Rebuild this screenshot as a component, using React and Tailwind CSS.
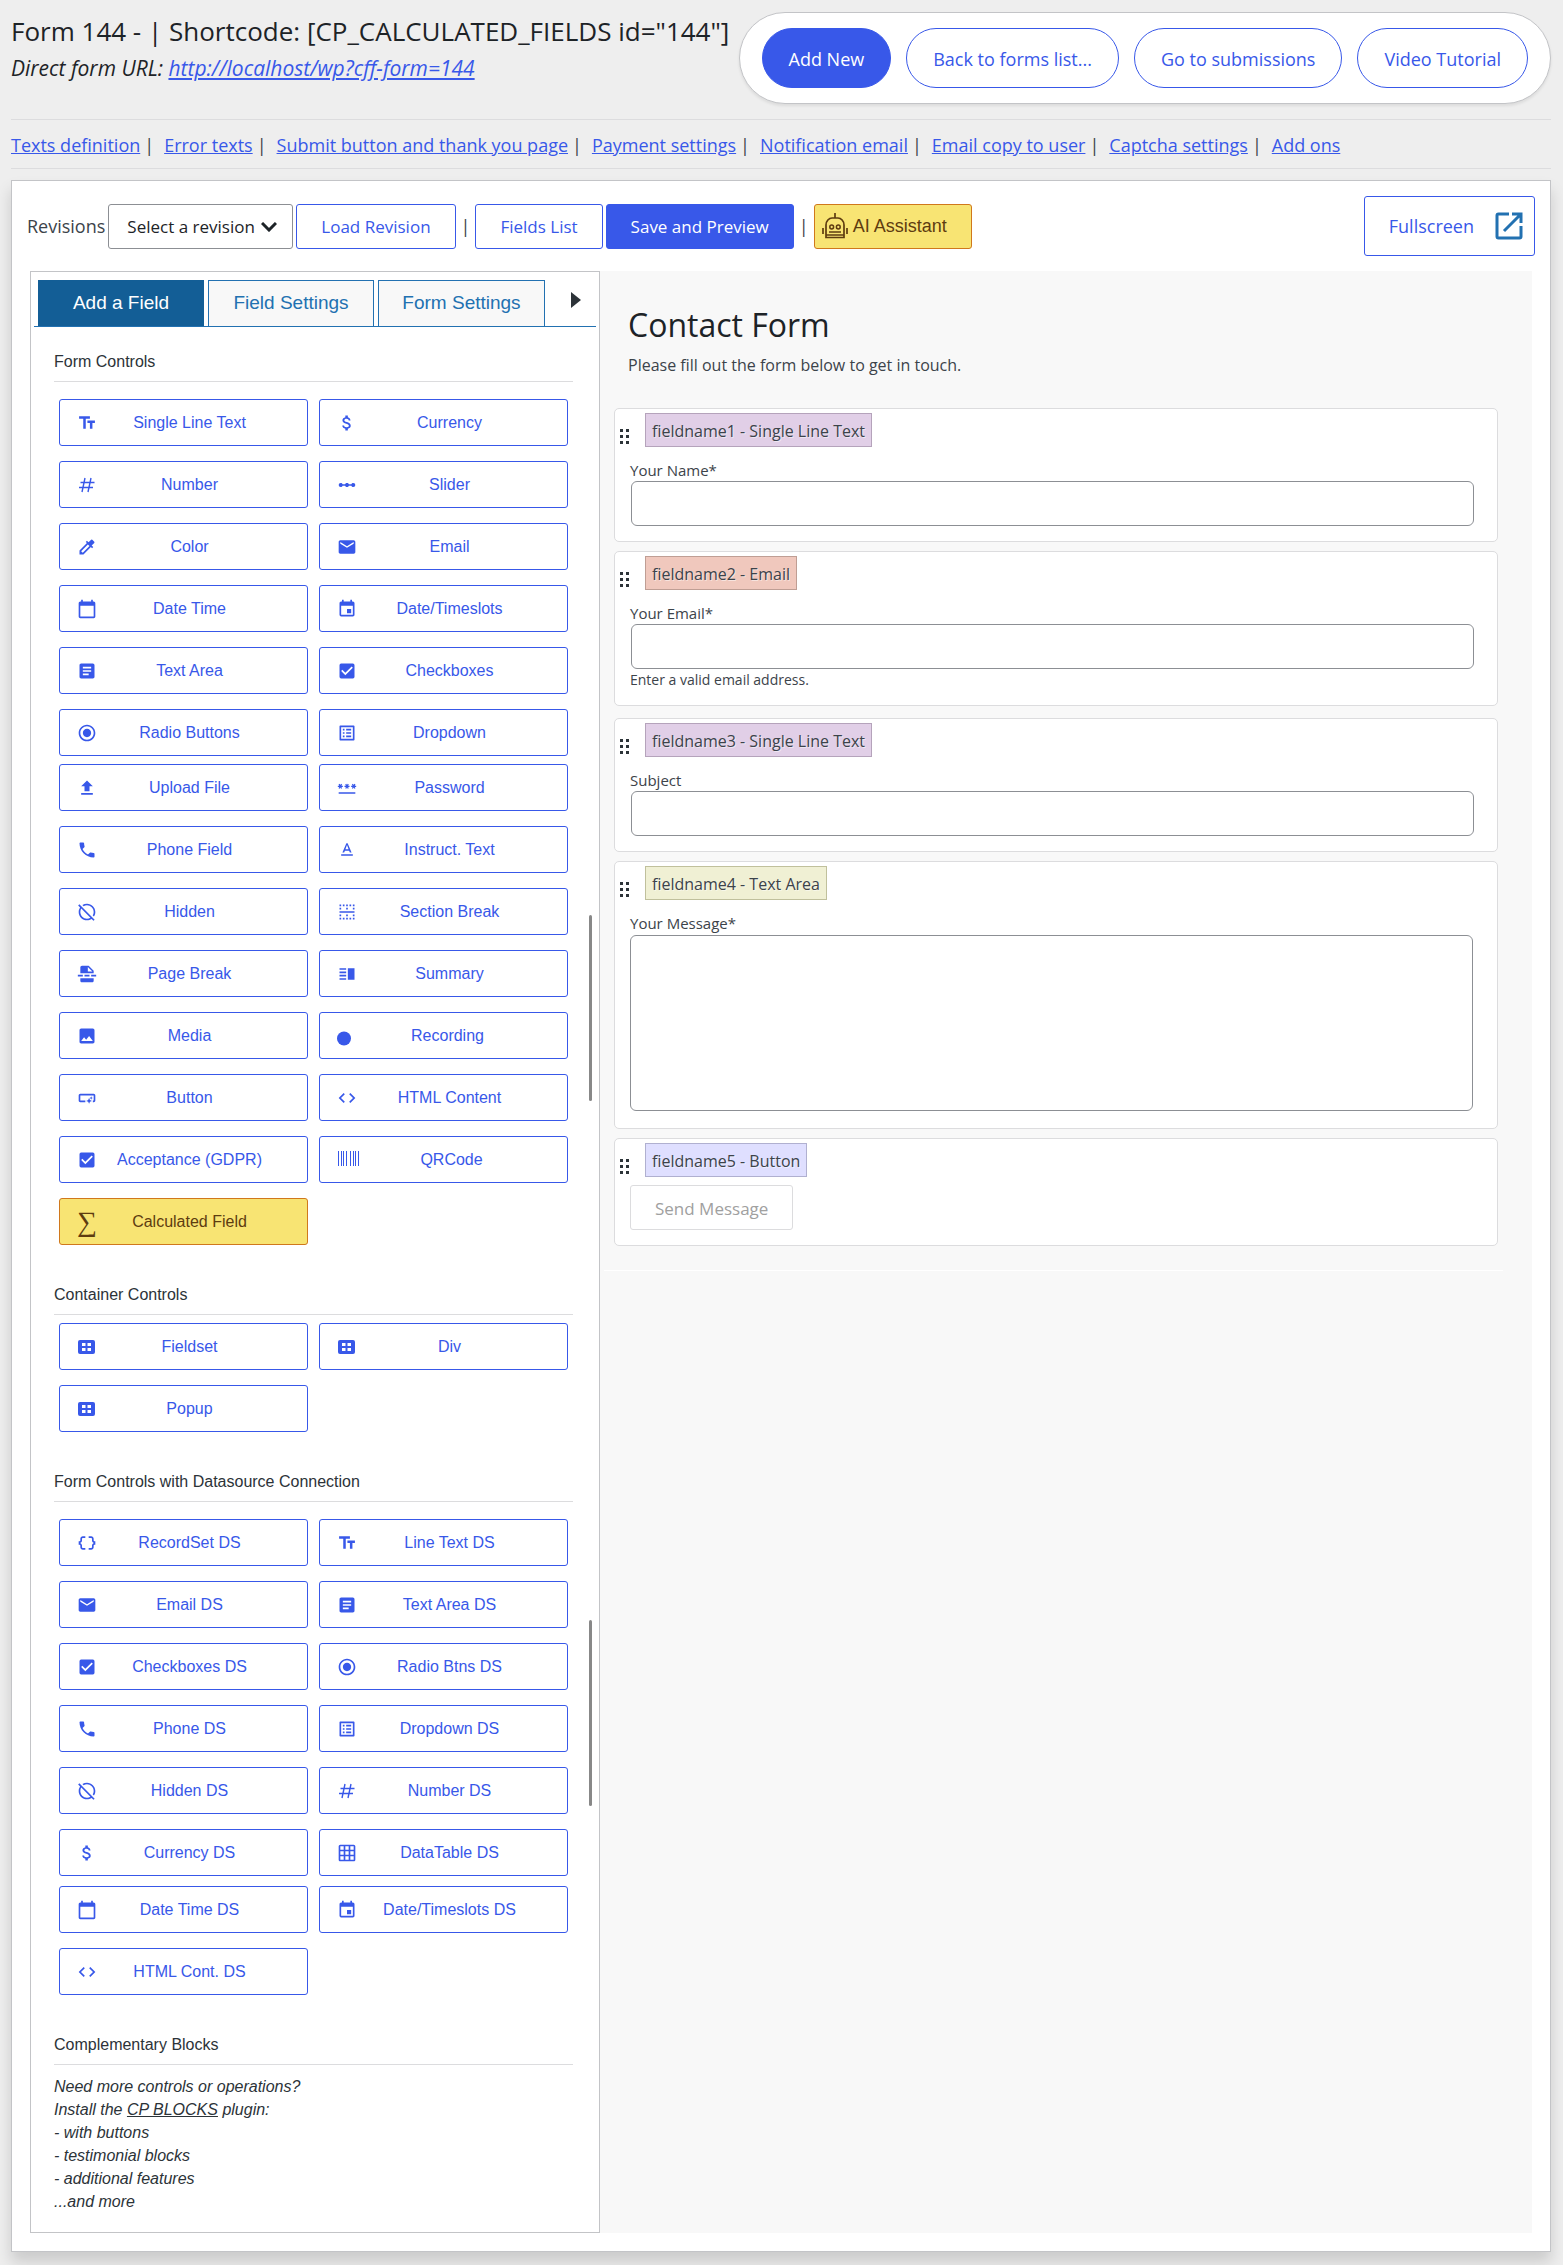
import {
  MdTextFields, MdAttachMoney, MdLinearScale, MdColorize, MdEmail, MdCalendarToday, MdEvent,
  MdArticle, MdCheckBox, MdRadioButtonChecked, MdListAlt, MdUpload, MdPassword, MdPhone, MdTextFormat,
  MdHideSource, MdBorderHorizontal, MdInsertPageBreak, MdVerticalSplit, MdImage, MdSmartButton, MdCode,
  MdDataObject, MdGridOn,
} from "react-icons/md";

const NAV = [
  "Texts definition", "Error texts", "Submit button and thank you page", "Payment settings",
  "Notification email", "Email copy to user", "Captcha settings", "Add ons",
];

function HashIcon() {
  return (
    <svg viewBox="0 0 20 20" className="size-5" fill="none" stroke="currentColor" strokeWidth="1.4" aria-hidden="true">
      <path d="M8 3L5 17M14 3l-3 14M3.500 7.500h14M2 12.500h14" />
    </svg>
  );
}

function RecordIcon() {
  return (
    <svg viewBox="0 0 16 20" className="h-5 w-4" fill="currentColor" aria-hidden="true">
      <circle cx="7" cy="12.500" r="7" />
    </svg>
  );
}

function BarcodeIcon() {
  return (
    <svg viewBox="0 0 24 20" className="h-5 w-6" fill="currentColor" aria-hidden="true">
      {[1, 4, 6, 9, 13, 16, 18, 21].map((x) => (
        <rect key={x} x={x} y="1" width="1" height="15" />
      ))}
    </svg>
  );
}

function SumIcon() {
  return <span className="w-5 font-['Liberation_Serif',serif] text-[28px] leading-5">∑</span>;
}

function GroupIcon() {
  return (
    <svg viewBox="0 0 20 20" className="size-5" aria-hidden="true">
      <rect x="1" y="3" width="17" height="14" rx="2" fill="currentColor" />
      <g fill="#fff">
        <rect x="5" y="6" width="3.500" height="3" />
        <rect x="10.500" y="6" width="3.500" height="3" />
        <rect x="5" y="11" width="3.500" height="3" />
        <rect x="10.500" y="11" width="3.500" height="3" />
      </g>
    </svg>
  );
}

const FORM_CONTROLS_A = [
  ["Single Line Text", MdTextFields], ["Currency", MdAttachMoney],
  ["Number", HashIcon], ["Slider", MdLinearScale],
  ["Color", MdColorize], ["Email", MdEmail],
  ["Date Time", MdCalendarToday], ["Date/Timeslots", MdEvent],
  ["Text Area", MdArticle], ["Checkboxes", MdCheckBox],
  ["Radio Buttons", MdRadioButtonChecked], ["Dropdown", MdListAlt],
];

const FORM_CONTROLS_B = [
  ["Upload File", MdUpload], ["Password", MdPassword],
  ["Phone Field", MdPhone], ["Instruct. Text", MdTextFormat],
  ["Hidden", MdHideSource], ["Section Break", MdBorderHorizontal],
  ["Page Break", MdInsertPageBreak], ["Summary", MdVerticalSplit],
  ["Media", MdImage], ["Recording", RecordIcon],
  ["Button", MdSmartButton], ["HTML Content", MdCode],
  ["Acceptance (GDPR)", MdCheckBox], ["QRCode", BarcodeIcon],
  ["Calculated Field", SumIcon, true],
];

const CONTAINERS = [["Fieldset", GroupIcon], ["Div", GroupIcon], ["Popup", GroupIcon]];

const DATASOURCE_A = [
  ["RecordSet DS", MdDataObject], ["Line Text DS", MdTextFields],
  ["Email DS", MdEmail], ["Text Area DS", MdArticle],
  ["Checkboxes DS", MdCheckBox], ["Radio Btns DS", MdRadioButtonChecked],
  ["Phone DS", MdPhone], ["Dropdown DS", MdListAlt],
  ["Hidden DS", MdHideSource], ["Number DS", HashIcon],
  ["Currency DS", MdAttachMoney], ["DataTable DS", MdGridOn],
];

const DATASOURCE_B = [
  ["Date Time DS", MdCalendarToday], ["Date/Timeslots DS", MdEvent],
  ["HTML Cont. DS", MdCode],
];

function ControlButton({ label, Icon, highlight }) {
  const tone = highlight
    ? "border-[#d0781c] bg-[#f8e473] text-[#5e3c10]"
    : "border-[#3858e9] bg-white text-[#3858e9]";
  return (
    <button type="button" className={`flex h-[47px] items-center rounded-[3px] border px-[17px] text-base ${tone}`}>
      <span className="flex shrink-0 items-center text-[20px]"><Icon /></span>
      <span className="grow pr-2 text-center">{label}</span>
    </button>
  );
}

function ControlGrid({ items }) {
  return (
    <div className="grid grid-cols-2 gap-x-[11px] gap-y-[15px] px-[5px]">
      {items.map(([label, Icon, highlight]) => (
        <ControlButton key={label} label={label} Icon={Icon} highlight={highlight} />
      ))}
    </div>
  );
}

function SectionTitle({ children }) {
  return (
    <h3 className="border-b border-[#dcdcde] pt-px pb-[7px] text-base leading-6 text-[#2c3338]">{children}</h3>
  );
}

function PillLink({ children, primary }) {
  const tone = primary ? "bg-[#3858e9] text-white" : "bg-white text-[#3858e9]";
  return (
    <a href="#" className={`flex h-[60px] items-center rounded-full border border-[#3858e9] px-[26px] pt-0.5 text-lg ${tone}`}>
      {children}
    </a>
  );
}

function OutlineButton({ children, primary }) {
  const tone = primary ? "bg-[#3858e9] text-white" : "bg-white text-[#3858e9]";
  return (
    <button type="button" className={`h-[45px] rounded-[3px] border border-[#3858e9] px-6 pt-0.5 text-[17px] ${tone}`}>
      {children}
    </button>
  );
}

function RobotIcon() {
  return (
    <svg viewBox="0 0 26 26" className="size-[26px]" fill="none" stroke="currentColor" strokeWidth="1.700" aria-hidden="true">
      <path d="M13 0v5M4 24.500V12c0-4 3-7 6-7h6c3 0 6 3 6 7v12.500zM1 15v6M25 15v6" />
      <circle cx="9.700" cy="14" r="1.900" strokeWidth="1.500" />
      <circle cx="16.300" cy="14" r="1.900" strokeWidth="1.500" />
      <path d="M7 19h12M4 22h18" strokeWidth="1.300" />
    </svg>
  );
}

function ExternalIcon() {
  return (
    <svg viewBox="0 0 28 28" className="size-7" fill="none" stroke="#2271b1" strokeWidth="3" aria-hidden="true">
      <path d="M14 2H3.500Q2 2 2 3.500V24.500Q2 26 3.500 26H24.500Q26 26 26 24.500V14" />
      <path d="M17 2h9v9M26 2L9 19" />
    </svg>
  );
}

function DragDots() {
  return (
    <svg viewBox="0 0 9 15" className="h-[15px] w-[9px]" fill="#2c3338" aria-hidden="true">
      {[0, 6, 12].map((y) => (
        <g key={y}>
          <rect x="0" y={y} width="3" height="3" />
          <rect x="6" y={y} width="3" height="3" />
        </g>
      ))}
    </svg>
  );
}

function FieldCard({ name, tagClass, children, className = "" }) {
  return (
    <section className={`rounded-[5px] border border-[#dcdcde] bg-white pt-1 pb-[15px] ${className}`}>
      <div className="flex items-start pl-[5px]">
        <span className="mt-4 w-[25px]"><DragDots /></span>
        <span className={`flex h-[34px] items-center border px-1.5 pt-0.5 text-base [text-shadow:1px_1px_0_rgba(255,255,255,0.5)] ${tagClass}`}>{name}</span>
      </div>
      {children}
    </section>
  );
}

function TextField({ id, label, help, type = "text" }) {
  return (
    <div className="mt-3 pr-6 pl-[15px]">
      <label htmlFor={id} className="block text-[15px] leading-[22px]">{label}</label>
      <input id={id} type={type} className="ml-px block h-[45px] w-full rounded-md border border-[#8c8f94] bg-white px-2" />
      {help && <p className="text-sm leading-[21px]">{help}</p>}
    </div>
  );
}

export default function App() {
  return (
    <div className="bg-[#eeeeee] px-[11px] pr-3 pb-3.5 font-['Open_Sans','Noto_Sans',sans-serif] text-[#3c434a]">
      <header className="flex items-start justify-between pt-3">
        <div>
          <h1 className="text-[26px] leading-[38px] text-[#1d2327]">
            Form 144 - | Shortcode: [CP_CALCULATED_FIELDS id="144"]
          </h1>
          <p className="text-[21px] leading-9 text-[#1d2327] italic">
            Direct form URL: <a href="#" className="text-[#3858e9] underline">http://localhost/wp?cff-form=144</a>
          </p>
        </div>
        <div className="flex gap-[15px] rounded-full border border-[#c3c4c7] bg-white px-[22px] py-[15px] shadow-[0_2px_3px_rgba(0,0,0,0.08)]">
          <PillLink primary>Add New</PillLink>
          <PillLink>Back to forms list...</PillLink>
          <PillLink>Go to submissions</PillLink>
          <PillLink>Video Tutorial</PillLink>
        </div>
      </header>

      <nav className="mt-[15px] flex h-[50px] items-center border-y border-[#dcdcde] pt-0.5 text-lg">
        {NAV.map((item, i) => (
          <span key={item} className="flex">
            <a href="#" className="text-[#3858e9] underline">{item}</a>
            {i < NAV.length - 1 && <span className="mr-2.5 ml-1">|</span>}
          </span>
        ))}
      </nav>

      <main className="mt-[11px] border border-[#c3c4c7] bg-white pb-[18px] shadow-[0_10px_14px_rgba(0,0,0,0.15)]">
        <div className="flex h-[90px] items-center pr-[15px] pl-[15px] text-lg">
          <label htmlFor="revision" className="mr-[3px]">Revisions</label>
          <span className="relative mr-[3px] flex">
            <select id="revision" className="h-[45px] appearance-none rounded-[3px] border border-[#8c8f94] bg-white pt-0.5 pr-[37px] pl-[18px] text-[17px] text-[#1d2327]">
              <option>Select a revision</option>
            </select>
            <svg viewBox="0 0 16 10" className="pointer-events-none absolute top-[18px] right-4 h-2.5 w-4" fill="none" stroke="#1d2327" strokeWidth="3" aria-hidden="true">
              <path d="M1 1l7 7 7-7" />
            </svg>
          </span>
          <OutlineButton>Load Revision</OutlineButton>
          <span className="mx-[5px]">|</span>
          <span className="mr-[3px] flex"><OutlineButton>Fields List</OutlineButton></span>
          <OutlineButton primary>Save and Preview</OutlineButton>
          <span className="mx-[5px]">|</span>
          <button type="button" className="flex h-[45px] items-center gap-[5px] rounded-[3px] border border-[#d0781c] bg-[#f8e473] pr-6 pl-[7px] text-[#5e3c10]">
            <RobotIcon />
            <span className="font-['Liberation_Sans',Arial,sans-serif]">AI Assistant</span>
          </button>
          <button type="button" className="ml-auto flex h-[60px] items-center gap-[21px] rounded-[3px] border border-[#3858e9] pr-[11px] pl-6 text-lg text-[#3858e9]">
            Fullscreen
            <ExternalIcon />
          </button>
        </div>

        <div className="flex px-[18px]">
          <aside className="relative w-[570px] shrink-0 border border-[#c3c4c7] px-[3px] pt-2 pb-[19px] font-['Liberation_Sans',Arial,sans-serif]">
            <div role="tablist" className="flex items-end gap-1 border-b border-[#2271b1] pl-1 text-[19px]">
              <button type="button" role="tab" aria-selected="true" className="h-[46px] w-[166px] bg-[#135e96] text-white">Add a Field</button>
              <button type="button" role="tab" aria-selected="false" className="h-[46px] w-[166px] border border-b-0 border-[#2271b1] bg-[#f8f8f8] text-[#2271b1]">Field Settings</button>
              <button type="button" role="tab" aria-selected="false" className="h-[46px] w-[167px] border border-b-0 border-[#2271b1] bg-[#f8f8f8] text-[#2271b1]">Form Settings</button>
              <button type="button" aria-label="Collapse" className="mb-[18px] ml-[22px]">
                <svg viewBox="0 0 10 16" className="h-4 w-2.5" fill="#2c3338" aria-hidden="true"><path d="M0 0l10 8-10 8z" /></svg>
              </button>
            </div>

            <div className="pt-[22px] pr-[23px] pl-5">
              <SectionTitle>Form Controls</SectionTitle>
              <div className="flex flex-col gap-2 pt-[17px]">
                <ControlGrid items={FORM_CONTROLS_A} />
                <ControlGrid items={FORM_CONTROLS_B} />
              </div>

              <div className="pt-[37px]">
                <SectionTitle>Container Controls</SectionTitle>
                <div className="pt-2"><ControlGrid items={CONTAINERS} /></div>
              </div>

              <div className="pt-[37px]">
                <SectionTitle>Form Controls with Datasource Connection</SectionTitle>
                <div className="flex flex-col gap-2.5 pt-[17px]">
                  <ControlGrid items={DATASOURCE_A} />
                  <ControlGrid items={DATASOURCE_B} />
                </div>
              </div>

              <div className="pt-[37px]">
                <SectionTitle>Complementary Blocks</SectionTitle>
                <p className="pt-2.5 text-base leading-[23px] text-[#2c3338] italic">
                  Need more controls or operations?<br />
                  Install the <a href="#" className="underline">CP BLOCKS</a> plugin:<br />
                  - with buttons<br />
                  - testimonial blocks<br />
                  - additional features<br />
                  ...and more
                </p>
              </div>
            </div>
            <span className="absolute top-[643px] right-[7px] h-[186px] w-[3px] rounded-full bg-[#888888]" />
            <span className="absolute top-[1348px] right-[7px] h-[186px] w-[3px] rounded-full bg-[#888888]" />
          </aside>

          <div className="grow bg-[#f8f8f8]">
            <form className="mr-[29px] ml-1 border-b border-white pt-8 pr-[5px] pb-6 pl-2.5" onSubmit={(e) => e.preventDefault()}>
              <div className="mb-[29px] pl-3.5">
                <h2 className="text-[32px] leading-[44px] text-[#1d2327]">Contact Form</h2>
                <p className="mt-1 text-base leading-7">Please fill out the form below to get in touch.</p>
              </div>

              <FieldCard name="fieldname1 - Single Line Text" tagClass="border-[#b5a3bb] bg-[#e1cfe7]">
                <TextField id="f1" label="Your Name*" />
              </FieldCard>
              <FieldCard name="fieldname2 - Email" tagClass="border-[#bf9e94] bg-[#f0c8bd]" className="mt-[9px]">
                <TextField id="f2" type="email" label="Your Email*" help="Enter a valid email address." />
              </FieldCard>
              <FieldCard name="fieldname3 - Single Line Text" tagClass="border-[#b5a3bb] bg-[#e1cfe7]" className="mt-3">
                <TextField id="f3" label="Subject" />
              </FieldCard>
              <FieldCard name="fieldname4 - Text Area" tagClass="border-[#c0c09c] bg-[#f0f0d4]" className="mt-[9px]">
                <div className="mt-3 pr-6 pb-0.5 pl-[15px]">
                  <label htmlFor="f4" className="block text-[15px] leading-[22px]">Your Message*</label>
                  <textarea id="f4" className="mt-px block h-44 w-full resize-none rounded-md border border-[#8c8f94] bg-white p-2" />
                </div>
              </FieldCard>
              <FieldCard name="fieldname5 - Button" tagClass="border-[#b0b0d0] bg-[#dfdfff]" className="mt-[9px]">
                <button type="submit" disabled className="mt-2 ml-[15px] block h-[45px] rounded-[3px] border border-[#dcdcde] bg-white px-6 pt-0.5 text-[17px] text-[#a0a0a0]">
                  Send Message
                </button>
              </FieldCard>
            </form>
          </div>
        </div>
      </main>
    </div>
  );
}
